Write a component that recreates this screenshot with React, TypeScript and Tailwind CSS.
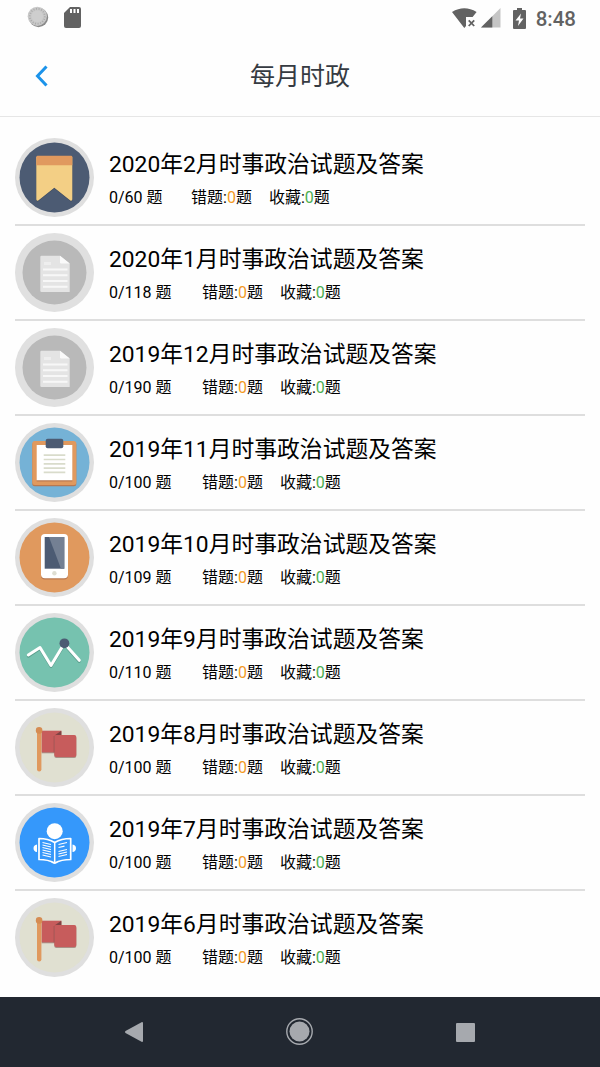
import type { ReactNode } from "react";

function Badge({ ring = "#dfdfdf", fill, r = 35, children }: { ring?: string; fill: string; r?: number; children: ReactNode }) {
  return (
    <svg viewBox="0 0 79 79" className="w-[79px] h-[79px] shrink-0" fill="none">
      <circle cx="39.5" cy="39.5" r="39.5" fill={ring} />
      <circle cx="39.5" cy="39.5" r={r} fill={fill} />
      {children}
    </svg>
  );
}

function BookmarkIcon() {
  return (
    <Badge fill="#4c5b73">
      <path d="M21.3 19v43q0 2 2 1.2L39.3 50.5 55.3 63.2q2 .8 2-1.2V19z" fill="#3f4b5f" />
      <path d="M21.3 19v42.3q0 2 2 1.2L39.3 49.7l16 12.8q2 .8 2-1.2V19z" fill="#f3cf85" />
      <path d="M21.3 27.3V19q0-1.3 1.3-1.3H56q1.3 0 1.3 1.3v8.3z" fill="#e0995e" />
    </Badge>
  );
}

function DocIcon() {
  return (
    <Badge ring="#e0e0e0" fill="#b9b9b9" r={32}>
      <path d="M26.5 22.7H45l9.7 7.8V59H26.5q-1.2 0-1.2-1.2V24q0-1.3 1.2-1.3z" fill="#e4e4e4" />
      <path d="M45 22.7v6.5q0 1.3 1.3 1.3h8.4z" fill="#fafafa" />
      <path d="M28 36.5h24.5M28 42.3h24.5M28 48h24.5M28 53.8h24.5" stroke="#f7f7f7" strokeWidth="2" />
      <path d="M29 30.5h7" stroke="#eee" strokeWidth="3" />
    </Badge>
  );
}

function ClipboardIcon() {
  return (
    <Badge fill="#75b2d6">
      <rect x="17.3" y="19.2" width="44" height="44" rx="2.5" fill="#b9784f" />
      <rect x="17.3" y="18" width="44" height="44" rx="2.5" fill="#e0995e" />
      <path d="M21.7 57h35.6v1.5H21.7z" fill="#b9784f" />
      <path d="M21.7 22h35.6v35.3H21.7z" fill="#fff" />
      <rect x="30.7" y="15.7" width="17.6" height="9.5" rx="2" fill="#4c5b73" />
      <path d="M28.7 32.2h21.6M28.7 36.5h21.6M28.7 40.8h21.6M28.7 45.1h21.6M28.7 49.4h21.6" stroke="#d9dccb" strokeWidth="1.7" />
    </Badge>
  );
}

function PhoneIcon() {
  return (
    <Badge fill="#e0995e">
      <rect x="26" y="17.2" width="27" height="44.3" rx="4" fill="#b9784f" />
      <rect x="26" y="16" width="27" height="44.3" rx="4" fill="#fff" />
      <path d="M29.7 19h19.6v31.7H29.7z" fill="#4c5b73" />
      <path d="M34 19h15.3v31.7H46z" fill="#748093" />
      <circle cx="39.4" cy="55.2" r="2.2" fill="#deded2" />
    </Badge>
  );
}

function ChartIcon() {
  return (
    <Badge fill="#76c2af">
      <path d="M13.3 43.2 25 35.5l11 18 13.3-22 15 17" stroke="#5b9e8d" strokeWidth="3" strokeLinejoin="round" strokeLinecap="round" />
      <path d="M13.3 42 25 34.5l11 18 13.3-22 15 16.8" stroke="#fff" strokeWidth="3" strokeLinejoin="round" strokeLinecap="round" />
      <circle cx="49.4" cy="30.3" r="4.9" fill="#4c5b73" />
    </Badge>
  );
}

function FlagIcon() {
  return (
    <Badge fill="#e0e0d1">
      <path d="M26.7 23.7h19.6v21.6H26.7z" fill="#aa9086" />
      <path d="M26.7 22.7h19.6v21.6H26.7z" fill="#c75c5c" />
      <path d="M39.5 27.5 46.3 22.7V27z" fill="#804343" />
      <rect x="39.3" y="28" width="22" height="22" rx="2" fill="#aa9086" />
      <rect x="39.3" y="27" width="22" height="22" rx="2" fill="#c75c5c" />
      <path d="M39.1 28v16.5" stroke="#9e4e4e" strokeWidth=".8" />
      <rect x="22" y="22" width="4.4" height="41.5" rx="2.2" fill="#e0995e" />
      <circle cx="24.1" cy="22.4" r="3.3" fill="#d58c52" />
    </Badge>
  );
}

function ReaderIcon() {
  return (
    <Badge fill="#3598fb">
      <circle cx="39.7" cy="28.2" r="8" fill="#fff" />
      <path d="M22 41.5q-3.5.5-3.5 3.8t3.5 3.8zM57.5 41.5q3.5.5 3.5 3.8t-3.5 3.8z" fill="#fff" />
      <path d="M35.5 58.5q4 4.5 8 0z" fill="#fff" />
      <path d="M24 35.5q9 0 15.7 4 6.7-4 16-4v21q-9.3 0-16 3.5-6.7-3.5-15.7-3.5z" fill="#3598fb" stroke="#fff" strokeWidth="1.7" strokeLinejoin="round" />
      <path d="M39.7 39.5V60" stroke="#fff" strokeWidth="1.5" />
      <path
        d="m27.5 39.5 8.500 2M27.5 42l8.5 2M27.5 44.500l8.5 2M27.5 47l8.5 2M27.5 49.500l8.5 2M27.5 52l8.5 2M43.5 41.500l8.5-2M43.5 44.500l6-1.3M43.5 48.500l8.5-2M43.5 51l8.5-2M43.5 53.500l8.5-2"
        stroke="#fff"
        strokeWidth="1.2"
      />
    </Badge>
  );
}

const items = [
  { month: "2020年2月", total: 60, Icon: BookmarkIcon },
  { month: "2020年1月", total: 118, Icon: DocIcon },
  { month: "2019年12月", total: 190, Icon: DocIcon },
  { month: "2019年11月", total: 100, Icon: ClipboardIcon },
  { month: "2019年10月", total: 109, Icon: PhoneIcon },
  { month: "2019年9月", total: 110, Icon: ChartIcon },
  { month: "2019年8月", total: 100, Icon: FlagIcon },
  { month: "2019年7月", total: 100, Icon: ReaderIcon },
  { month: "2019年6月", total: 100, Icon: FlagIcon },
];

function StatusBar() {
  return (
    <div className="flex h-9 items-center justify-between pl-[27px] pr-6">
      <div className="flex items-center gap-[15px] pb-[2px]">
        <svg viewBox="0 0 22 22" className="h-[22px] w-[22px]" fill="none">
          <circle cx="11.500" cy="11.500" r="9.700" fill="#8a8a8a" />
          <circle cx="10.300" cy="10.300" r="9.600" fill="#c8c8c8" />
          <circle cx="10.300" cy="10.300" r="7.500" stroke="#aaa" strokeWidth="1.800" strokeDasharray="1 1.600" />
          <circle cx="10.300" cy="10.300" r="5.800" fill="#cecece" />
        </svg>
        <svg viewBox="0 0 17 21" className="h-[21px] w-[17px]">
          <path d="M6 0h9q2 0 2 2v17q0 2-2 2H2q-2 0-2-2V6z" fill="#626262" />
          <path d="M6 2h2v4H6zM9.500 2h2v4h-2zM13 2h2v4h-2z" fill="#fff" />
        </svg>
      </div>
      <div className="flex items-center">
        <svg viewBox="0 0 25 20" className="h-5 w-[25px]" fill="none">
          <path d="M0 4Q12.300-3.500 24.600 4l-4 5H14v9l-1.700 2z" fill="#626262" />
          <path d="m16.700 12.300 5.500 5.700m0-5.700L16.700 18" stroke="#626262" strokeWidth="1.800" />
        </svg>
        <svg viewBox="0 0 20 20" className="ml-1 h-5 w-5">
          <path d="M19.500 0v19.500H0z" fill="#c5c5c5" />
          <path d="M11.300 8.200v11.300H0z" fill="#626262" />
        </svg>
        <svg viewBox="0 0 13 21" className="ml-3 h-[21px] w-[13px]">
          <path d="M4 0h5v2h3q1 0 1 1v17q0 1-1 1H1q-1 0-1-1V3q0-1 1-1h3z" fill="#626262" />
          <path d="M8 5.500 2.500 12.500H6L5 18l5.500-7.500H7z" fill="#fff" />
        </svg>
        <span className="ml-[10px] pt-px text-[20.5px] leading-6 font-medium text-[#626262]">8:48</span>
      </div>
    </div>
  );
}

function NavBar() {
  return (
    <div className="flex h-[70px] items-center justify-between bg-[#222831] pl-[124px] pr-[125px]">
      <svg viewBox="0 0 20 20" className="h-5 w-5" fill="#a6a9ae">
        <path d="M18 0q1 0 1 1v18q0 1-1 1L1.500 11q-1.200-1 0-2z" />
      </svg>
      <svg viewBox="0 0 28 28" className="h-7 w-7" fill="none">
        <circle cx="13.500" cy="13.500" r="12.700" stroke="#a6a9ae" strokeWidth="1.400" />
        <circle cx="13.500" cy="13.500" r="10" fill="#a6a9ae" />
      </svg>
      <div className="h-[19px] w-[19px] rounded-[1px] bg-[#a6a9ae]" />
    </div>
  );
}

export default function App() {
  return (
    <div className="flex h-[1067px] w-[600px] flex-col overflow-hidden bg-[#fefefe] font-[Roboto,'Noto_Sans_CJK_SC',sans-serif]">
      <StatusBar />
      <header className="grid h-[81px] grid-cols-[1fr_auto_1fr] items-center border-b border-[#e6e6e6]">
        <svg viewBox="0 0 12 22" className="ml-[35px] h-[22px] w-[13px]" fill="none">
          <path d="M11 1.500 2 11l9 9.500" stroke="#1b93ea" strokeWidth="3" />
        </svg>
        <h1 className="pt-[2px] text-[25px] leading-8 text-[#363b42]">每月时政</h1>
      </header>
      <ul className="flex-1 px-[15px] pt-[14px]">
        {items.map(({ month, total, Icon }) => (
          <li key={month} className="flex h-[95px] items-start border-b-2 border-[#dedede] pt-[7px] last:border-transparent">
            <Icon />
            <div className="ml-[15px] pt-[11px] whitespace-nowrap text-black">
              <h2 className="text-[22.8px] leading-8">{month}时事政治试题及答案</h2>
              <p className="mt-[3px] flex text-[16px] leading-7">
                <span className={total < 100 ? "w-[82px]" : "w-[93px]"}>0/{total} 题</span>
                <span>
                  错题:<span className="text-[#f39a1e]">0</span>题
                </span>
                <span className="ml-[17px]">
                  收藏:<span className="text-[#4caf50]">0</span>题
                </span>
              </p>
            </div>
          </li>
        ))}
      </ul>
      <NavBar />
    </div>
  );
}
